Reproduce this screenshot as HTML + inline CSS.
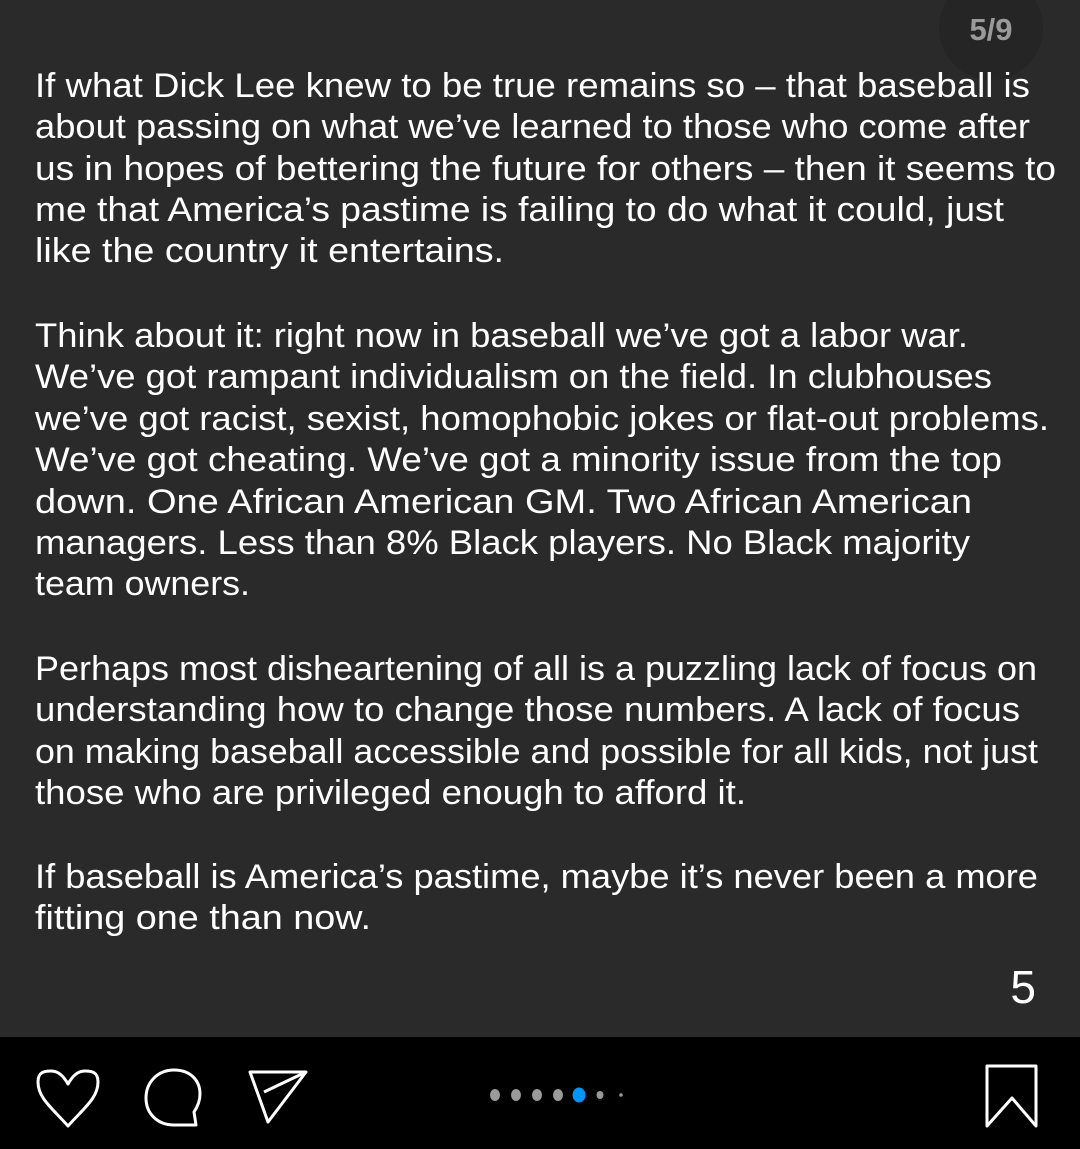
<!DOCTYPE html>
<html><head><meta charset="utf-8"><style>
html,body{margin:0;padding:0;background:#2a2a2a;width:1080px;height:1149px;overflow:hidden}
svg{display:block}
</style></head><body>
<svg width="1080" height="1149" viewBox="0 0 1080 1149" xmlns="http://www.w3.org/2000/svg">
<rect width="1080" height="1149" fill="#2a2a2a"/>
<circle cx="991" cy="28" r="52" fill="#252525"/>
<text x="991" y="40" text-anchor="middle" font-family="Liberation Sans, sans-serif" font-size="31" fill="#9a9a9a" font-weight="bold">5/9</text>
<g font-family="Liberation Sans, sans-serif" font-size="34" fill="#ffffff" lengthAdjust="spacingAndGlyphs">
<text x="35" y="97" textLength="995" lengthAdjust="spacingAndGlyphs">If what Dick Lee knew to be true remains so – that baseball is</text>
<text x="35" y="138" textLength="995" lengthAdjust="spacingAndGlyphs">about passing on what we’ve learned to those who come after</text>
<text x="35" y="180" textLength="1021" lengthAdjust="spacingAndGlyphs">us in hopes of bettering the future for others – then it seems to</text>
<text x="35" y="221" textLength="969" lengthAdjust="spacingAndGlyphs">me that America’s pastime is failing to do what it could, just</text>
<text x="35" y="262" textLength="469" lengthAdjust="spacingAndGlyphs">like the country it entertains.</text>

<text x="35" y="347" textLength="933" lengthAdjust="spacingAndGlyphs">Think about it: right now in baseball we’ve got a labor war.</text>
<text x="35" y="388" textLength="957" lengthAdjust="spacingAndGlyphs">We’ve got rampant individualism on the field. In clubhouses</text>
<text x="35" y="430" textLength="1014" lengthAdjust="spacingAndGlyphs">we’ve got racist, sexist, homophobic jokes or flat-out problems.</text>
<text x="35" y="471" textLength="967" lengthAdjust="spacingAndGlyphs">We’ve got cheating. We’ve got a minority issue from the top</text>
<text x="35" y="513" textLength="937" lengthAdjust="spacingAndGlyphs">down. One African American GM. Two African American</text>
<text x="35" y="554" textLength="935" lengthAdjust="spacingAndGlyphs">managers. Less than 8% Black players. No Black majority</text>
<text x="35" y="595" textLength="215" lengthAdjust="spacingAndGlyphs">team owners.</text>

<text x="35" y="680" textLength="1002" lengthAdjust="spacingAndGlyphs">Perhaps most disheartening of all is a puzzling lack of focus on</text>
<text x="35" y="721" textLength="985" lengthAdjust="spacingAndGlyphs">understanding how to change those numbers. A lack of focus</text>
<text x="35" y="763" textLength="1003" lengthAdjust="spacingAndGlyphs">on making baseball accessible and possible for all kids, not just</text>
<text x="35" y="804" textLength="711" lengthAdjust="spacingAndGlyphs">those who are privileged enough to afford it.</text>

<text x="35" y="888" textLength="1003" lengthAdjust="spacingAndGlyphs">If baseball is America’s pastime, maybe it’s never been a more</text>
<text x="35" y="929" textLength="336" lengthAdjust="spacingAndGlyphs">fitting one than now.</text>
</g>
<text x="1036" y="1003" text-anchor="end" font-family="Liberation Sans, sans-serif" font-size="46" fill="#fff">5</text>
<rect x="0" y="1037" width="1080" height="112" fill="#000"/>
<g fill="none" stroke="#fff" stroke-width="3" stroke-linejoin="round">
<path d="M68 1126 C52 1108 38 1098 38 1082 C38 1072 44 1071 51 1071 C59 1071 64 1077 68 1084 C72 1077 77 1071 85 1071 C92 1071 98 1072 98 1082 C98 1098 84 1108 68 1126 Z"/>
<path d="M174 1070 C158 1070 146 1082 146 1098 C146 1114 158 1125 174 1125 L196 1125 L194 1112 C198 1106 200 1100 200 1094 C200 1080 190 1070 174 1070 Z"/>
<path d="M250 1072 L306 1072 L268 1122 Z M250 1072 L268 1122 M264 1092 L306 1072"/>
<path d="M987 1066 L1036 1066 L1036 1126 L1012 1098 L987 1126 Z"/>
</g>
<g fill="#9a9a9a">
<ellipse cx="495" cy="1095" rx="5" ry="6"/>
<ellipse cx="516" cy="1095" rx="5" ry="6"/>
<ellipse cx="537" cy="1095" rx="5" ry="6"/>
<ellipse cx="558" cy="1095" rx="5" ry="6"/>
<ellipse cx="600" cy="1095" rx="3.5" ry="4"/>
<circle cx="621" cy="1095" r="1.8"/>
</g>
<ellipse cx="579" cy="1095" rx="6.5" ry="7.5" fill="#0095f6"/>
</svg>
</body></html>
